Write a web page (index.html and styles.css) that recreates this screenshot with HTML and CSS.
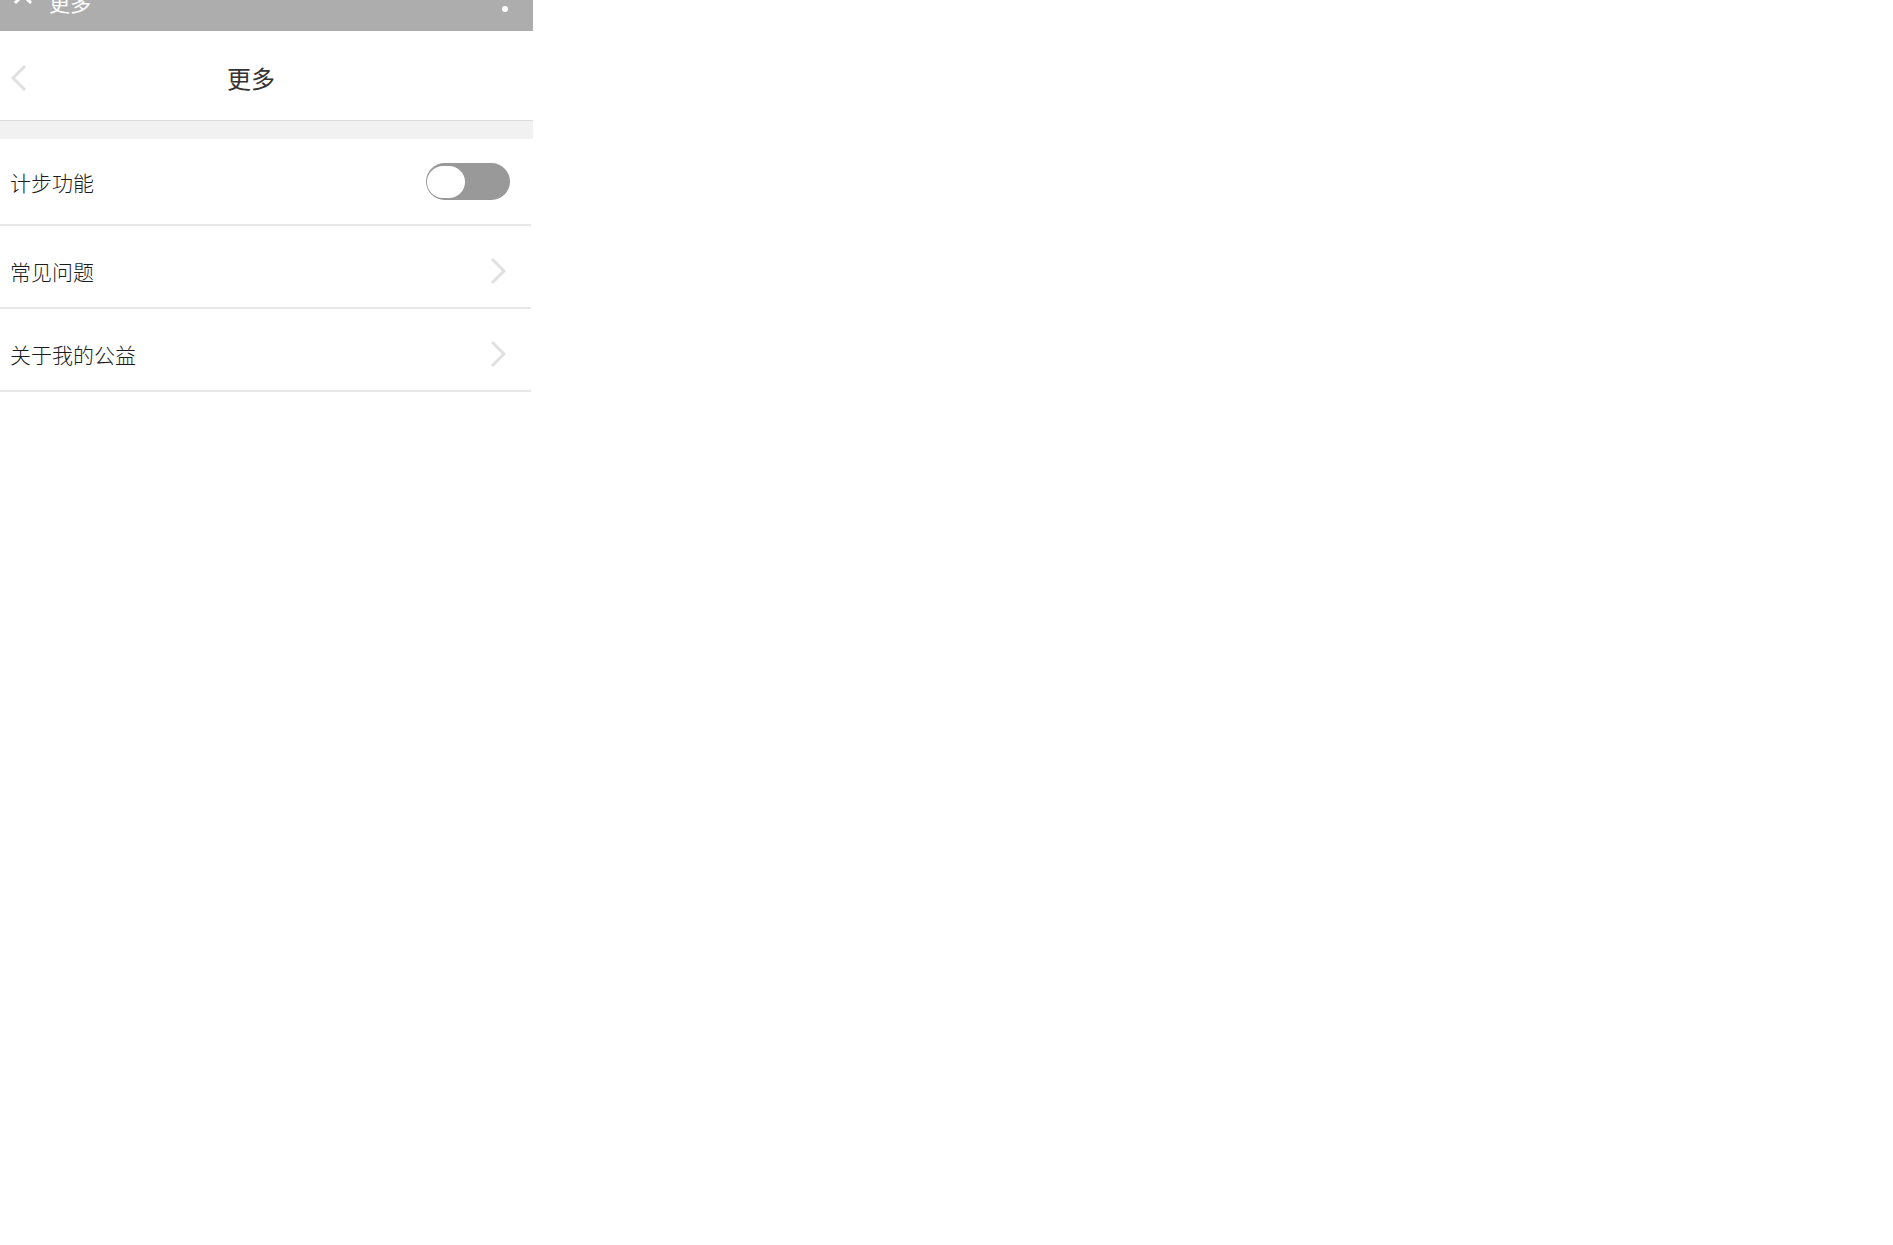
FILE: index.html
```
<!DOCTYPE html>
<html lang="zh">
<head>
    <meta charset="UTF-8">
    <meta name="viewport" content="width=device-width, initial-scale=1.0">
    <title>更多</title>
    <link rel="stylesheet" href="styles.css">
</head>
<body>
    <div class="page">
        <!-- 顶部状态栏 -->
        <div class="topbar">
            <button type="button" class="icon-button" aria-label="关闭">
                <svg width="20" height="20" viewBox="0 0 20 20"><path d="M2 1L18 17M18 1L2 17"/></svg>
            </button>
            <span class="topbar-title">更多</span>
            <button type="button" class="icon-button" aria-label="菜单">
                <svg class="dots" width="8" height="34" viewBox="0 0 8 34"><circle cx="4" cy="4" r="3"/><circle cx="4" cy="17" r="3"/><circle cx="4" cy="30" r="3"/></svg>
            </button>
        </div>

        <header class="header">
            <button type="button" class="icon-button" aria-label="返回">
                <svg class="arrow" width="16" height="28" viewBox="0 0 16 28"><path d="M14 2L2 14L14 26"/></svg>
            </button>
            <h1>更多</h1>
        </header>

        <!-- 设置列表 -->
        <main class="list">
            <div class="row row-switch">
                <label for="stepSwitch">计步功能</label>
                <input type="checkbox" id="stepSwitch" class="switch">
            </div>
            <a href="#" class="row row-link">
                <span>常见问题</span>
                <svg class="arrow" width="16" height="28" viewBox="0 0 16 28"><path d="M2 2L14 14L2 26"/></svg>
            </a>
            <a href="#" class="row row-link">
                <span>关于我的公益</span>
                <svg class="arrow" width="16" height="28" viewBox="0 0 16 28"><path d="M2 2L14 14L2 26"/></svg>
            </a>
        </main>
    </div>
</body>
</html>
```
FILE: styles.css
```
* {
    box-sizing: border-box;
}

body {
    margin: 0;
    background-color: #fff;
    color: #1c1c1c;
    font-family: "Noto Sans CJK SC", sans-serif;
    font-size: 21px;
    font-weight: 300;
    line-height: 30px;
}

.page {
    max-width: 533px;
    overflow: hidden;
}

.icon-button {
    display: flex;
    padding: 0;
    border: none;
    background: none;
    cursor: pointer;
}

svg {
    fill: none;
    stroke: #fff;
    stroke-width: 3;
}

/* 顶部栏，上半部分滚出屏幕 */
.topbar {
    display: flex;
    align-items: center;
    height: 63px;
    margin-top: -32px;
    padding: 0 24px 8px 13px;
    background-color: #adadad;
    color: #fff;
    font-weight: 400;
}

.topbar-title {
    flex: 1;
    padding: 12px 0 0 16px;
}

.dots {
    fill: #fff;
    stroke: none;
}

.header {
    display: flex;
    align-items: center;
    height: 90px;
    padding: 4px 58px 0 11px;
    border-bottom: 1px solid #dcdcdc;
}

.header h1 {
    flex: 1;
    margin: 0;
    color: #333;
    font-size: 24px;
    font-weight: 400;
    text-align: center;
}

.arrow {
    stroke: #e0e0e0;
}

.list {
    border-top: 18px solid #f1f1f1;
}

.row {
    display: flex;
    align-items: center;
    justify-content: space-between;
    margin-right: 2px;
    padding: 0 25px 0 10px;
    border-bottom: 2px solid #e8e8e8;
    color: inherit;
    text-decoration: none;
}

.row-switch {
    height: 87px;
    padding-right: 21px;
}

.row-link {
    height: 83px;
    padding-top: 8px;
}

/* 开关 */
.switch {
    display: flex;
    align-items: center;
    width: 84px;
    height: 37px;
    margin: 0;
    padding: 0 1px;
    border-radius: 19px;
    background-color: #999;
    appearance: none;
    cursor: pointer;
}

.switch::before {
    content: "";
    width: 38px;
    height: 32px;
    border-radius: 18px;
    background-color: #fff;
}

.switch:checked {
    justify-content: flex-end;
    background-color: #4cd964;
}
```
